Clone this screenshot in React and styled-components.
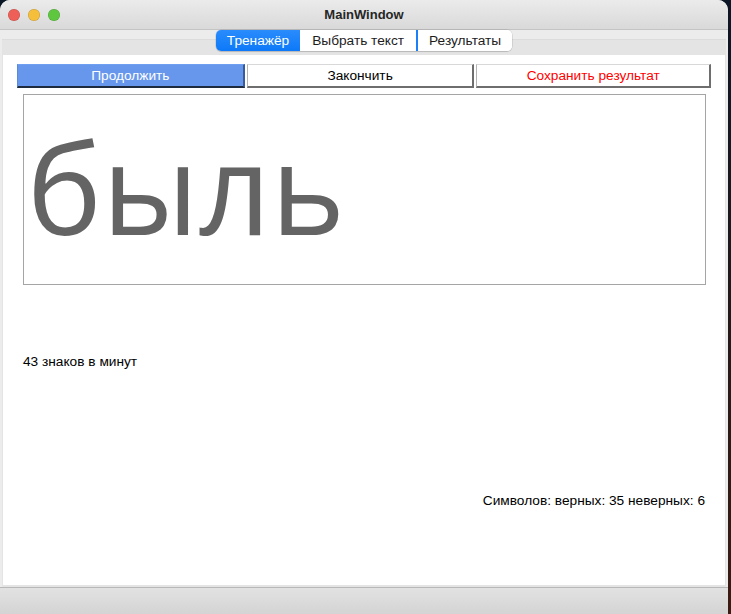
import React, { useState } from 'react'
import styled, { createGlobalStyle } from 'styled-components'

const Global = createGlobalStyle`
  html, body { margin: 0; padding: 0; }
  body {
    width: 731px;
    height: 614px;
    overflow: hidden;
    font-family: "Liberation Sans", Arial, sans-serif;
    background: linear-gradient(180deg, #0b1626 0%, #1c1a1c 40%, #3a1c12 100%);
  }
`

const Window = styled.div`
  width: 728px;
  height: 630px;
  background: #ececec;
  border-radius: 10px 10px 0 0;
  overflow: hidden;
  display: flex;
  flex-direction: column;
`

const TitleBar = styled.div`
  height: 29px;
  flex: none;
  display: grid;
  grid-template-columns: 80px 1fr 80px;
  align-items: center;
  background: linear-gradient(180deg, #ebebeb 0%, #d9d9d9 100%);
  border-bottom: 1px solid #c4c4c4;
`

const Lights = styled.div`
  display: flex;
  gap: 8px;
  padding-left: 8px;
`

const Light = styled.span`
  width: 12px;
  height: 12px;
  border-radius: 50%;
  background: ${p => p.color};
  box-shadow: inset 0 0 0 0.5px rgba(0,0,0,0.2);
`

const Title = styled.div`
  text-align: center;
  font-size: 13px;
  font-weight: bold;
  color: #262626;
`

const Body = styled.div`
  flex: 1;
  display: flex;
  flex-direction: column;
  padding: 0 2px;
`

const TabBar = styled.div`
  align-self: center;
  position: relative;
  z-index: 1;
  display: flex;
  margin-left: 0;
  height: 21px;
  background: #fff;
  border-radius: 5px;
  box-shadow: 0 0 0 0.5px rgba(0,0,0,0.15), 0 1px 1px rgba(0,0,0,0.12);
  overflow: hidden;
`

const Tab = styled.div`
  display: flex;
  align-items: center;
  padding: 0 ${p => p.$pad}px;
  font-size: 13.7px;
  color: ${p => (p.$active ? '#fff' : '#1d1d1d')};
  background: ${p => (p.$active ? 'linear-gradient(180deg, #2a8cfc, #0d79f8)' : '#fff')};
  border-left: ${p => (p.$divider ? '2px solid #1a7ff8' : 'none')};
`

const Pane = styled.div`
  flex: 1;
  margin-top: -12px;
  display: flex;
  flex-direction: column;
  border-top: 1px solid #dcdcdc;
  background: #e4e4e4;
  padding-top: 15px;
`

const Page = styled.div`
  height: 521px;
  flex: none;
  margin: 0 1px;
  background: #fff;
  display: flex;
  flex-direction: column;
  padding: 9px 14px 0 14px;
`

const Buttons = styled.div`
  display: grid;
  grid-template-columns: 1fr 1fr 1.03fr;
  gap: 2px;
`

const Button = styled.button`
  height: 24px;
  margin: 0;
  padding: 0;
  font-family: inherit;
  font-size: 13.7px;
  color: ${p => p.$textColor || '#000'};
  background: ${p => (p.$primary ? '#6697ec' : '#fff')};
  border: 1px solid ${p => (p.$primary ? '#5b8ad9' : '#b4b4b4')};
  border-right: 2px solid ${p => (p.$primary ? '#3a5c96' : '#6e6e6e')};
  border-bottom: 2px solid ${p => (p.$primary ? '#1e2a3e' : '#6e6e6e')};
  border-top-color: ${p => (p.$primary ? '#6f9ff0' : '#d8d8d8')};
  cursor: pointer;
`

const WordBox = styled.div`
  margin: 6px 5px 0 6px;
  height: 189px;
  border: 1px solid #a5a5a5;
  display: flex;
  align-items: center;
  padding-left: 3px;
  overflow: hidden;
`

const Word = styled.div`
  font-family: "Open Sans", "Noto Sans", sans-serif;
  font-size: 126px;
  color: #646464;
  line-height: 1;
  margin-top: -8px;
`

const Speed = styled.div`
  margin: 69px 0 0 6px;
  font-size: 13.7px;
  color: #000;
`

const Stats = styled.div`
  margin: 124px 6px 0 0;
  text-align: right;
  font-size: 13.7px;
  color: #000;
`

const StatusBar = styled.div`
  flex: 1;
  margin: 2px -2px 0;
  border-top: 1px solid #b8b8b8;
  background: linear-gradient(180deg, #e2e2e2 0%, #cbcbcb 100%);
`

export default function App() {
  const [tab, setTab] = useState(0)
  const tabs = [
    { label: 'Тренажёр', pad: 11 },
    { label: 'Выбрать текст', pad: 12 },
    { label: 'Результаты', pad: 11 },
  ]
  return (
    <>
      <Global />
      <Window>
        <TitleBar>
          <Lights>
            <Light color="#ee5f57" />
            <Light color="#f5bf3c" />
            <Light color="#5ec73f" />
          </Lights>
          <Title>MainWindow</Title>
          <div />
        </TitleBar>
        <Body>
          <TabBar>
            {tabs.map((t, i) => (
              <Tab
                key={t.label}
                $pad={t.pad}
                $active={tab === i}
                $divider={i === 2}
                onClick={() => setTab(i)}
              >
                {t.label}
              </Tab>
            ))}
          </TabBar>
          <Pane>
            <Page>
              <Buttons>
                <Button $primary $textColor="#fff">Продолжить</Button>
                <Button>Закончить</Button>
                <Button $textColor="#ff0000">Сохранить результат</Button>
              </Buttons>
              <WordBox>
                <Word>быль</Word>
              </WordBox>
              <Speed>43 знаков в минут</Speed>
              <Stats>Символов: верных: 35 неверных: 6</Stats>
            </Page>
            <StatusBar />
          </Pane>
        </Body>
      </Window>
    </>
  )
}
